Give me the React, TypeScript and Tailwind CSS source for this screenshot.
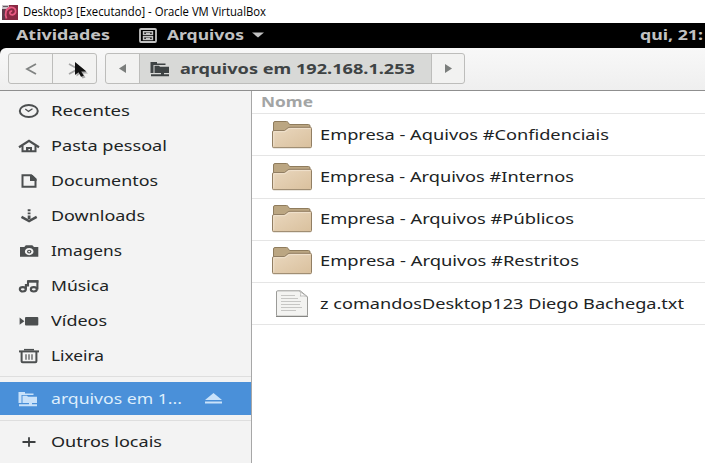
import { useLayoutEffect, useRef } from "react";
import type { ReactNode } from "react";

/** Text stretched horizontally to fill a fixed width. */
function Fit({ w, className = "", children }: { w: number; className?: string; children: ReactNode }) {
  const ref = useRef<HTMLSpanElement>(null);
  useLayoutEffect(() => {
    const el = ref.current;
    if (el && el.offsetWidth) el.style.transform = `scaleX(${w / el.getBoundingClientRect().width})`;
  }, []);
  return (
    <span className="block shrink-0" style={{ width: w }}>
      <span ref={ref} className={`inline-block origin-left whitespace-nowrap ${className}`}>
        {children}
      </span>
    </span>
  );
}

function RemoteIcon({ className = "" }: { className?: string }) {
  return (
    <svg className={className} width="20" height="16" viewBox="0 0 20 16" fill="currentColor">
      <path d="M0.500 1h6.500v1.500h8.500V4H3.500v8h-3z" />
      <path d="M4.500 4.800h4.500l1 1h9V12h-14.500z" />
      <path d="M11 12h3v2h-3zM1 13.300h18v2H1z" />
    </svg>
  );
}

function PlaceIcon({ name }: { name: string }) {
  const s = { fill: "none", stroke: "currentColor", strokeWidth: 2 };
  return (
    <svg width="22" height="16" viewBox="0 0 22 16" fill="currentColor">
      {name === "recent" && (
        <g {...s}>
          <ellipse cx="10.800" cy="8" rx="9" ry="6" />
          <path d="M7.300 6l3.200 2.400 4-2.600" strokeWidth="1.300" />
        </g>
      )}
      {name === "home" && (
        <>
          <path d="M1 9.200L11 2.800l10 6.400" {...s} strokeWidth="2.200" />
          <path d="M4.500 8v5.300h13V8" {...s} />
          <path d="M8 9h6v5h-2v-3h-1.600v3H8z" />
        </>
      )}
      {name === "docs" && (
        <>
          <path d="M4.500 2.200h8.700l4.300 4v7.600h-13z" {...s} />
          <path d="M12 2h2.500l4 4v2H12z" />
        </>
      )}
      {name === "down" && (
        <>
          <path d="M9.700 1.300h2.800v2H9.700zM9.700 4.500h2.800v1.800H9.700zM9.700 7.500h2.800V11H9.700z" />
          <path d="M3.500 8.800l7.600 4.200 7.600-4.200" {...s} strokeWidth="2.500" />
        </>
      )}
      {name === "images" && (
        <>
          <path
            fillRule="evenodd"
            d="M2 4h4.300l1.500-1.800h6.500L16 4h4.300v9.700H2zM11.200 5c-2.600 0-4.300 1.600-4.300 3.600s1.700 3.600 4.300 3.600 4.300-1.600 4.300-3.600S13.800 5 11.200 5z"
          />
          <ellipse cx="11.200" cy="8.600" rx="2.200" ry="1.900" />
          <ellipse cx="11.200" cy="8.600" rx="1" ry=".8" fill="#f3f3f3" />
        </>
      )}
      {name === "music" && (
        <>
          <g {...s} strokeWidth="2.100">
            <ellipse cx="4.800" cy="11.300" rx="3" ry="2.200" />
            <ellipse cx="15.800" cy="11.300" rx="3" ry="2.200" />
            <path d="M7.900 11.500V6M10 3.300h9.400v8.200M10 3v5.500" />
          </g>
          <path d="M9 2.200h11.400v2.400H9z" />
        </>
      )}
      {name === "video" && (
        <>
          <rect x="7" y="4" width="13.300" height="8.600" rx="1" />
          <path d="M1.600 4.600l4.800 3.600-4.800 3.600z" />
        </>
      )}
      {name === "trash" && (
        <g {...s}>
          <path d="M1 3.400h20" strokeWidth="2" />
          <path d="M6 1.700h10" strokeWidth="1.600" />
          <path d="M3.600 4v9.200q0 1 1 1h12.800q1 0 1-1V4" />
          <path d="M8 6.300v5.400M11 6.300v5.400M14 6.300v5.400" strokeWidth="1.200" />
        </g>
      )}
      {name === "plus" && <path d="M4.500 8h13M11 3.200v9.600" {...s} strokeWidth="1.800" />}
    </svg>
  );
}

const places: [string, string, number][] = [
  ["recent", "Recentes", 79],
  ["home", "Pasta pessoal", 116],
  ["docs", "Documentos", 107],
  ["down", "Downloads", 94],
  ["images", "Imagens", 71],
  ["music", "Música", 58],
  ["video", "Vídeos", 56],
  ["trash", "Lixeira", 53],
];

const files: [string, number][] = [
  ["Empresa - Aquivos #Confidenciais", 289],
  ["Empresa - Arquivos #Internos", 254],
  ["Empresa - Arquivos #Públicos", 254],
  ["Empresa - Arquivos #Restritos", 259],
];

function Folder() {
  return (
    <svg width="42" height="30" viewBox="0 0 42 30">
      <defs>
        <linearGradient id="front" x1="0" y1="0" x2="1" y2="1">
          <stop offset="0" stopColor="#ead8bf" />
          <stop offset="1" stopColor="#d9c09d" />
        </linearGradient>
      </defs>
      <path d="M2.500 16V3q0-1.500 1.500-1.500h11.500q1 0 1.700 1l1.300 2h19q1.500 0 1.500 1.500v10z" fill="#bba682" stroke="#8f7c5d" />
      <path
        d="M1.500 26.500V12q0-1.500 1.500-1.500h10.500L17 7.800q1-.5 2-.5h20.300q1.200 0 1.200 1.200v18q0 1.200-1.200 1.200H2.700q-1.200 0-1.200-1.200z"
        fill="url(#front)"
        stroke="#917e63"
      />
      <path d="M2.800 25.800V11.700h11.300L17.600 9q.7-.4 1.600-.4h20" fill="none" stroke="#f3e6d3" strokeWidth=".8" />
    </svg>
  );
}

function TextFile() {
  return (
    <svg width="42" height="30" viewBox="0 0 42 30">
      <path d="M5.500 3q0-1.200 1.200-1.200h22.500l7.300 6V26q0 1.200-1.200 1.200H6.700q-1.200 0-1.200-1.200z" fill="#f3f3f1" stroke="#9b9b98" />
      <path d="M5 27.500h32" stroke="#858582" />
      <path d="M28.500 2.200c1.500 1.200 1.500 3.400.8 5 2-.5 5.200-.4 7 .7z" fill="#fff" stroke="#b1b1ae" strokeWidth=".8" />
      <path d="M10 6.500h14M10 9.500h17M10 12.500h20M10 15.500h19M10 18.500h21M10 21.500h15" stroke="#c6c6c4" />
    </svg>
  );
}

export default function App() {
  return (
    <div className="flex h-[463px] w-[705px] flex-col overflow-hidden bg-white font-['Noto_Sans','Open_Sans',sans-serif] text-[14px] leading-5 text-[#202324]">
      <div className="flex h-[23px] shrink-0 items-center bg-white pl-[2px]">
        <svg width="16" height="16" viewBox="0 0 16 16">
          <path d="M0 1h16v15H0z" fill="#872943" />
          <path d="M0 1h7v4H0z" fill="#c9c2c7" />
          <path d="M1 2.500h5" stroke="#675b64" />
          <path d="M0 5h3v11H0z" fill="#5d3b4b" />
          <path
            d="M4.500 14.500C2.500 9 4 4.500 8.500 3.500c4-.6 6 2.500 5 5.200-1 2.400-4.500 2.800-5.500.9-.5-1.600.8-2.700 2.200-2.300"
            fill="none"
            stroke="#e85b83"
            strokeWidth="1.800"
          />
        </svg>
        <div className="pl-[5px] font-['Open_Sans','Noto_Sans',sans-serif] text-[12px] text-black">
          <Fit w={243}>Desktop3 [Executando] - Oracle VM VirtualBox</Fit>
        </div>
      </div>

      <div className="bg-black">
        <div className="flex h-[24px] shrink-0 items-center pl-4 font-bold text-[#c2c2c2]">
          <Fit w={94}>Atividades</Fit>
          <svg className="ml-[29px]" width="18" height="15" viewBox="0 0 18 15" fill="none" stroke="currentColor">
            <rect x="1" y="1" width="16" height="13" rx="1" strokeWidth="1.800" />
            <path d="M4.500 3.800h9v2.700h-9zM4.500 8.800h9v2.700h-9z" strokeWidth="1.400" />
            <path d="M7 5.300h4M7 10.300h4" strokeWidth="1.200" />
          </svg>
          <div className="pl-[10px]">
            <Fit w={77}>Arquivos</Fit>
          </div>
          <svg className="ml-2" width="12" height="6" viewBox="0 0 12 6" fill="currentColor">
            <path d="M0 .5h12L6 5.500z" />
          </svg>
          <div className="ml-auto pr-[2px]">
            <Fit w={63}>qui, 21:</Fit>
          </div>
        </div>

        <div className="mt-px flex h-[43px] items-center rounded-tl-[6px] border-b border-[#8f8f8f] bg-gradient-to-b from-[#f8f8f8] to-[#efefef] pb-px pl-2">
          <div className="flex h-[31px] w-[89px] rounded-[3px] border border-[#bdbdbb] bg-[#f2f2f1]">
            <div className="flex w-[44px] items-center justify-center border-r border-[#bdbdbb] text-[#808382]">
              <svg width="12" height="12" viewBox="0 0 12 12" fill="none" stroke="currentColor" strokeWidth="1.800">
                <path d="M11 1L2 6l9 5" />
              </svg>
            </div>
            <div className="relative flex flex-1 items-center pl-[15px] text-[#a5a5a5]">
              <svg width="12" height="12" viewBox="0 0 12 12" fill="none" stroke="currentColor" strokeWidth="1.800">
                <path d="M1 1l9 5-9 5" />
              </svg>
              <svg className="absolute top-[7px] left-[21px]" width="16" height="19" viewBox="0 0 16 19">
                <path d="M2.500 2.500v13l3.500-2.500 2.500 4.500 3-1-2.500-4h5z" fill="#aaa" />
                <path d="M1 1v13l3.500-2.700L7 15.800l2.800-1-2.600-4.300h5.300z" fill="#111" />
              </svg>
            </div>
          </div>

          <div className="ml-[8px] flex h-[31px] w-[360px] overflow-hidden rounded-[3px] border border-[#bdbdbb] bg-[#f2f2f1] text-[#7b7e7c]">
            <div className="flex w-[34px] items-center justify-center border-r border-[#bdbdbb]">
              <svg width="7" height="9" viewBox="0 0 7 9" fill="currentColor">
                <path d="M7 0v9L0 4.500z" />
              </svg>
            </div>
            <div className="flex flex-1 items-center bg-[#d8d9d7] pl-[10px] font-bold text-[#3e4344]">
              <RemoteIcon />
              <div className="pl-[10px]">
                <Fit w={235}>arquivos em 192.168.1.253</Fit>
              </div>
            </div>
            <div className="flex w-[33px] items-center justify-center border-l border-[#bdbdbb]">
              <svg width="7" height="9" viewBox="0 0 7 9" fill="currentColor">
                <path d="M0 0v9l7-4.500z" />
              </svg>
            </div>
          </div>
        </div>
      </div>

      <div className="flex min-h-0 flex-1">
        <aside className="w-[252px] shrink-0 border-r border-[#a7a7a7] bg-[#f3f3f3] pt-[3px]">
          {places.map(([icon, label, w]) => (
            <div key={icon} className="flex h-[34.900px] items-center gap-[11px] pl-[18px] text-[#4c4f50]">
              <PlaceIcon name={icon} />
              <Fit w={w} className="text-[#202324]">
                {label}
              </Fit>
            </div>
          ))}
          <div className="mt-[3px] h-px bg-[#dedede]" />
          <div className="mt-[5px] flex h-[33px] items-center bg-[#4a90d9] pl-[18px] text-[#c9e2fa]">
            <RemoteIcon />
            <div className="pl-[13px] text-[#deeefc]">
              <Fit w={131}>arquivos em 1...</Fit>
            </div>
            <svg className="ml-[23px]" width="17" height="11" viewBox="0 0 17 11" fill="currentColor">
              <path d="M8.500 0L17 7H0zM0 8.500h17v2H0z" />
            </svg>
          </div>
          <div className="mt-[5px] h-px bg-[#dedede]" />
          <div className="mt-[3px] flex h-[35px] items-center gap-[11px] pl-[18px] text-[#3c3f40]">
            <PlaceIcon name="plus" />
            <Fit w={111} className="text-[#202324]">
              Outros locais
            </Fit>
          </div>
        </aside>

        <main className="flex-1 overflow-hidden">
          <div className="flex h-[23px] items-center border-b border-[#e5e5e5] pl-[9px] font-bold text-[#a3a5a5]">
            <Fit w={52}>Nome</Fit>
          </div>
          {files.map(([label, w]) => (
            <div key={label} className="flex h-[42.250px] items-center border-b border-[#e5e5e5] pl-[19px]">
              <Folder />
              <div className="pl-[7px]">
                <Fit w={w}>{label}</Fit>
              </div>
            </div>
          ))}
          <div className="flex h-[42px] items-center border-b border-[#e5e5e5] pl-[19px]">
            <TextFile />
            <div className="pl-[7px]">
              <Fit w={364}>z comandosDesktop123 Diego Bachega.txt</Fit>
            </div>
          </div>
        </main>
      </div>
    </div>
  );
}
